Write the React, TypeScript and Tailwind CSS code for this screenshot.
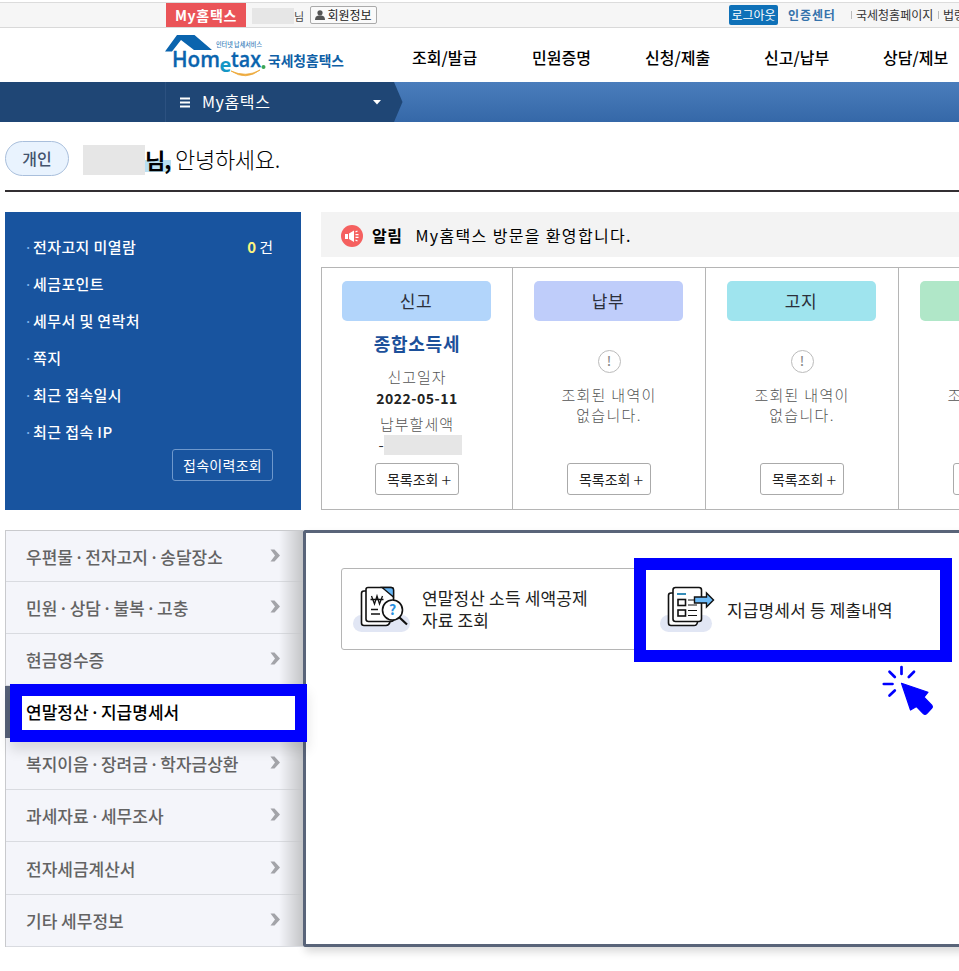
import clsx from 'clsx'

interface SummaryItem {
  label: string
  count?: number
}

interface StatusCard {
  title: string
  color: string
  width: string
  filled?: boolean
}

const navItems = [
  { label: '조회/발급', width: 'w-[120px]' },
  { label: '민원증명', width: 'w-[113px]' },
  { label: '신청/제출', width: 'w-[119px]' },
  { label: '신고/납부', width: 'w-[119px]' },
  { label: '상담/제보', width: 'w-[80px]' },
]

const summaryItems: SummaryItem[] = [
  { label: '전자고지 미열람', count: 0 },
  { label: '세금포인트' },
  { label: '세무서 및 연락처' },
  { label: '쪽지' },
  { label: '최근 접속일시' },
  { label: '최근 접속 IP' },
]

const statusCards: StatusCard[] = [
  { title: '신고', color: 'bg-[#b2d5fb]', width: 'w-[191px]', filled: true },
  { title: '납부', color: 'bg-[#bfcdfa]', width: 'w-[193px]' },
  { title: '고지', color: 'bg-[#9fe4ee]', width: 'w-[193px]' },
  { title: '환급', color: 'bg-[#b0e7c8]', width: 'w-[193px]' },
]

const menuItems = [
  '우편물 · 전자고지 · 송달장소',
  '민원 · 상담 · 불복 · 고충',
  '현금영수증',
  '연말정산 · 지급명세서',
  '복지이음 · 장려금 · 학자금상환',
  '과세자료 · 세무조사',
  '전자세금계산서',
  '기타 세무정보',
]

const ACTIVE_MENU = 3

const Logo = () => (
  <svg width="182" height="46" viewBox="0 0 182 46" className="block">
    <path d="M0 18.500 L12 2 H29.500 L47 17 H29 L16 7 L7 18.500 Z" fill="#0a64ae" />
    <text x="51" y="14" fontSize="6.5" fontWeight="500" fill="#3a7fbb" textLength="46" lengthAdjust="spacingAndGlyphs">
      인터넷 납세서비스
    </text>
    <g fontFamily="'Open Sans', sans-serif" fontWeight="600" fill="#0a64ae" stroke="#0a64ae" strokeWidth="0.3">
      <text x="7" y="34" fontSize="21" textLength="48" lengthAdjust="spacingAndGlyphs">Hom</text>
      <text x="66" y="34" fontSize="21" textLength="30" lengthAdjust="spacingAndGlyphs">tax</text>
      <text x="54.5" y="39" fontSize="20" fontWeight="700" fill="#1597c5" stroke="none">e</text>
    </g>
    <circle cx="98.500" cy="34" r="2" fill="#3aa655" />
    <path d="M66 38 Q81 48 95 37 Q81 45 66 38 Z" fill="#eda93b" stroke="#eda93b" strokeWidth="0.8" />
    <text x="103" y="33" fontSize="14" fontWeight="700" fill="#0f5fa6" textLength="76" lengthAdjust="spacingAndGlyphs">
      국세청홈택스
    </text>
  </svg>
)

const SearchDocIcon = () => (
  <svg width="58" height="48" viewBox="0 0 58 48" fill="none" stroke="#111" strokeWidth="1.6">
    <rect x="0" y="30" width="57" height="17" rx="8.5" fill="#e1e6f4" stroke="none" />
    <path d="M13 6 H11 Q8.500 6 8.500 8.500 V38 Q8.500 40.500 11 40.500 H33 Q36 40.500 37 37" fill="#fff" />
    <path d="M15 2.500 H38 Q40.500 2.500 40.500 5 V34 Q40.500 36.500 38 36.500 H15.500 Q13 36.500 13 34 V4.500 Q13 2.500 15 2.500 Z" fill="#fff" />
    <path d="M29 2.500 H38 Q40.500 2.500 40.500 5 V12 Z" fill="#66b5f5" strokeWidth="1.300" />
    <path d="M18.500 11 L21.500 19 L24 11 L26.500 19 L29.500 11 M17.500 14.500 H30.500" strokeWidth="1.3" />
    <path d="M18 24.500 H25 M18 29 H27" strokeWidth="1.4" />
    <circle cx="39.500" cy="25" r="10" fill="#fff" />
    <path d="M46.500 32.500 L54 39.500" strokeWidth="2.200" />
    <text x="39.700" y="30" fontSize="14" fontWeight="700" fill="#2a8fe0" stroke="none" textAnchor="middle">?</text>
  </svg>
)

const SubmitDocIcon = () => (
  <svg width="56" height="48" viewBox="0 0 56 48" fill="none" stroke="#111" strokeWidth="1.6">
    <rect x="0" y="30" width="52" height="17" rx="8.500" fill="#e1e6f4" stroke="none" />
    <path d="M13 8 H11 Q8.500 8 8.500 10.500 V38 Q8.500 40.500 11 40.500 H34 Q37 40.500 37.500 37" fill="#fff" />
    <rect x="13" y="2.500" width="28.500" height="34" rx="2.500" fill="#fff" />
    <path d="M17 9 H26" stroke="#1f7fb0" strokeWidth="1.8" />
    <rect x="18" y="14.500" width="7.500" height="6" />
    <rect x="18" y="25" width="7.500" height="6" />
    <path d="M28 15 H36 M28 20 H37 M28 25.500 H37 M28 30.500 H37" strokeWidth="1.200" />
    <path d="M34.500 12 H46.500 V8 L53.500 15 L46.500 22 V18 H34.500 Z" fill="#6bbaf8" strokeWidth="1.400" />
  </svg>
)

const SectionArrow = () => (
  <svg width="11" height="13" viewBox="0 0 11 13" fill="#a3a4a9" className="-mt-0.5">
    <path d="M0.500 0.500 H4.500 L10 6.500 L4.500 12.500 H0.500 L5 6.500 Z" />
  </svg>
)

const ClickCursor = () => (
  <svg width="52" height="52" viewBox="0 0 52 52" className="absolute left-[882px] top-[665px]">
    <g stroke="#0000fe" strokeWidth="2.700" strokeLinecap="round">
      <path d="M19.500 2 V9 M7.500 6.800 L12.800 12 M32 6.800 L26.800 12 M1.800 19 H10.500 M7.500 30.500 L12.800 25.500" />
    </g>
    <path
      d="M19.500 18.300 L46 27.200 L42 32.200 L50 40.500 Q51 42 49.800 43.200 L44.500 48.800 Q43 50 41.500 48.800 L34.500 41.500 L28.500 45 Z"
      fill="#0000fe"
      stroke="#0000fe"
      strokeWidth="1.200"
      strokeLinejoin="round"
    />
  </svg>
)

const UtilityBar = () => (
  <div className="flex h-7 items-center border-b border-[#d9d9d9] bg-[#f6f6f6] pl-[166px] shadow-[inset_0_2px_0_#fff,inset_0_3px_0_#dcdcdc]">
    <div className="mt-[3px] flex h-6 w-20 shrink-0 items-center justify-center bg-[#ea5458] text-[14px] font-bold tracking-[0.700px] text-white">
      My홈택스
    </div>
    <div className="ml-1.5 mt-1 h-4 w-[42px] shrink-0 bg-[#e6e6e6]" />
    <span className="mt-1.5 w-[10px] shrink-0 text-[11px] text-[#444]">님</span>
    <div className="ml-[6px] mt-0.5 flex h-[18px] w-[67px] shrink-0 items-center justify-center gap-0.5 rounded-xs border border-[#aaa] bg-[#fafafa] text-[12px] text-[#222]">
      <svg width="10" height="10" viewBox="0 0 10 10" fill="#555">
        <circle cx="5" cy="2.800" r="2.600" />
        <path d="M0 10 Q0 5.800 3.500 5.500 H6.500 Q10 5.800 10 10 Z" />
      </svg>
      <span>회원정보</span>
    </div>
    <div className="ml-[352px] mt-0.5 flex h-5 w-[49px] shrink-0 items-center justify-center rounded-xs bg-[#0f71b8] text-[12px] text-white">
      로그아웃
    </div>
    <span className="ml-[10px] mt-0.5 w-[63px] shrink-0 text-[12px] font-bold tracking-[0.900px] text-[#3572ab]">인증센터</span>
    <span className="mt-0.5 h-2 w-px shrink-0 bg-[#bbb]" />
    <span className="ml-1 mt-0.5 w-[82px] shrink-0 text-[12px] text-[#333]">국세청홈페이지</span>
    <span className="mt-0.5 h-2 w-px shrink-0 bg-[#bbb]" />
    <span className="ml-1 mt-0.5 shrink-0 text-[12px] text-[#333]">법령정보</span>
  </div>
)

const Header = () => (
  <header>
    <UtilityBar />
    <div className="flex h-[54px] pl-[165px]">
      <div className="w-[247px] shrink-0 pt-[5px]">
        <Logo />
      </div>
      <nav className="flex items-center pt-1 text-[16px] font-medium text-black">
        {navItems.map((item) => (
          <a key={item.label} className={clsx('shrink-0', item.width)}>
            {item.label}
          </a>
        ))}
      </nav>
    </div>
    <div className="flex h-10 bg-linear-to-b from-[#4a7dbc] to-[#3568a8]">
      <div className="w-[166px] border-r border-[#2c5180] bg-[#1f4675]" />
      <div className="flex w-[228px] items-center bg-[#1f4675] pl-[14px] pr-[13px] text-white">
        <svg width="10" height="11" viewBox="0 0 10 11" stroke="#fff" strokeWidth="2">
          <path d="M0 1.500 H10 M0 5.500 H10 M0 9.500 H10" />
        </svg>
        <span className="-mt-0.5 ml-3 grow text-[16px] tracking-[0.600px]">My홈택스</span>
        <svg width="8" height="5" viewBox="0 0 8 5" fill="#fff">
          <path d="M0 0 H8 L4 4.500 Z" />
        </svg>
      </div>
      <svg width="9" height="40" viewBox="0 0 9 40">
        <path d="M0 0 L8.500 20 L0 40 Z" fill="#1f4675" />
      </svg>
    </div>
  </header>
)

const Greeting = () => (
  <div className="ml-[5px] flex h-[70px] items-center border-b-2 border-[#332f32] pt-[5px]">
    <span className="flex h-[35px] w-16 items-center justify-center rounded-full border border-[#a9bfdc] bg-[#e9f3fe] pb-0.5 text-[16px] font-medium text-[#44546e]">
      개인
    </span>
    <span className="ml-[14px] mt-[3px] h-[30px] w-[62px] bg-[#e6e6e6]" />
    <span className="w-[26px] bg-linear-to-b from-transparent from-55% to-[#b9dff2] to-55% text-[22px] leading-[26px] font-bold tracking-[-1px] text-black">
      님,
    </span>
    <span className="-mt-0.5 ml-1 text-[22px] font-light tracking-[-0.300px] text-black">안녕하세요.</span>
  </div>
)

const SummaryPanel = () => (
  <section className="h-[298px] w-[296px] shrink-0 bg-[#18549f] pt-4 pr-7 pl-[19px] text-white">
    <ul>
      {summaryItems.map((item) => (
        <li key={item.label} className="flex h-[37px] items-center text-[15px]">
          <span className="w-[9px] text-[#7fb4ec]">·</span>
          <span className="grow font-medium tracking-[0.400px]">{item.label}</span>
          {item.count !== undefined && (
            <span>
              <b className="mr-[3px] text-[#fdf57e]">{item.count}</b>건
            </span>
          )}
        </li>
      ))}
    </ul>
    <button className="-mt-px ml-auto flex h-8 w-[101px] items-center justify-center rounded-[3px] border border-[#6e98cc] text-[14px] tracking-[0.300px]">
      접속이력조회
    </button>
  </section>
)

const Notice = () => (
  <div className="flex h-[45px] items-center bg-[#f3f3f3] pl-5 text-[16px] text-black">
    <svg width="22" height="22" viewBox="0 0 22 22" className="mt-0.5">
      <circle cx="11" cy="11" r="11" fill="#f5605f" />
      <path d="M4 9 H7 V14 H4 Z M8 8.500 L13 5.500 V17 L8 14 Z" fill="#fff" />
      <path d="M14.500 7 L16.500 6 M14.500 9.700 H17.500 M14.500 12.300 H17.500 M14.500 15 L16.500 16" stroke="#fff" strokeWidth="1.300" />
    </svg>
    <strong className="ml-[9px] font-bold tracking-[0.500px]">알림</strong>
    <span className="ml-[13px] tracking-[1.350px]">My홈택스 방문을 환영합니다.</span>
  </div>
)

const Card = ({ card }: { card: StatusCard }) => (
  <div
    className={clsx(
      'flex shrink-0 flex-col items-center border-r border-[#b5b5b5] pt-[13px]',
      card.width,
    )}
  >
    <h3
      className={clsx(
        'mr-0.5 flex h-10 w-[149px] items-center justify-center rounded-[5px] pb-0.5 text-[17px] tracking-[0.500px] text-[#2b2f3a]',
        card.color,
      )}
    >
      {card.title}
    </h3>
    <div className="flex h-[142px] w-full flex-col items-center text-[15px] text-[#555]">
      {card.filled ? (
        <>
          <p className="mt-2 text-[18px] leading-7 font-bold tracking-[0.700px] text-[#1c509a]">종합소득세</p>
          <p className="mt-[10px] leading-5 font-light tracking-[1px]">신고일자</p>
          <p className="text-[14px] leading-[22px] font-bold tracking-[0.500px] text-[#222]">2022-05-11</p>
          <p className="mt-[5px] leading-5 font-light tracking-[1px]">납부할세액</p>
          <p className="mt-px ml-[7px] flex w-[84px] items-center leading-5 text-[#333]">
            -<span className="h-5 w-[78px] shrink-0 bg-[#e6e6e6]" />
          </p>
        </>
      ) : (
        <>
          <span className="mt-[29px] flex size-[23px] items-center justify-center rounded-full border border-[#bbb] pb-0.5 text-[13px] font-medium text-[#888]">
            !
          </span>
          <p className="mt-3 text-center leading-5 font-light tracking-[1.300px]">
            조회된 내역이
            <br />
            없습니다.
          </p>
        </>
      )}
    </div>
    <button className="flex h-8 w-[84px] shrink-0 items-center justify-center gap-[3px] rounded-[3px] border border-[#aaa] pl-1 text-[14px] text-[#222]">
      목록조회 <span className="text-[18px] font-light">+</span>
    </button>
  </div>
)

const SideMenu = () => (
  <ul className="relative w-[298px] shrink-0 border border-r-0 border-[#c9cacd] bg-[#f4f5fa]">
    {menuItems.map((item, index) => (
      <li
        key={item}
        className={clsx(
          'flex h-[52.100px] items-center justify-between border-b border-[#d9dbe0] pr-[22px] pl-5 text-[17px] font-medium first:h-[51px] last:border-b-0',
          index === ACTIVE_MENU ? 'bg-white text-black' : 'text-[#636363]',
          item.includes('·') && '[word-spacing:-2.500px]',
        )}
      >
        {item}
        {index !== ACTIVE_MENU && <SectionArrow />}
      </li>
    ))}
    <span className="absolute inset-y-0 right-0 w-6 bg-linear-to-r from-transparent to-[#c4c5c7]" />
  </ul>
)

const App = () => {
  return (
    <div className="relative h-[971px] w-[959px] overflow-hidden bg-white font-['Noto_Sans_CJK_KR',sans-serif] leading-none whitespace-nowrap">
      <Header />
      <Greeting />
      <main className="ml-[5px] pt-5">
        <div className="flex gap-5">
          <SummaryPanel />
          <section className="w-[638px] shrink-0 overflow-hidden">
            <Notice />
            <div className="mt-[10px] flex h-[243px] w-[771px] border border-[#b5b5b5]">
              {statusCards.map((card) => (
                <Card key={card.title} card={card} />
              ))}
            </div>
          </section>
        </div>

        <div className="mt-5 flex h-[417px]">
          <SideMenu />
          <section className="flex w-[700px] shrink-0 items-start rounded-l-xs border-[3px] border-[#596479] pt-[35px] pl-[35px] text-[17px] tracking-[0.150px] text-[#222] shadow-[2px_5px_8px_rgba(0,0,0,0.15)]">
            <a className="flex h-[82px] w-[304px] items-center rounded-[3px] border border-[#b5b5b5] pl-[11px] leading-[22px]">
              <SearchDocIcon />
              <span className="ml-[11px]">
                연말정산 소득 세액공제
                <br />
                자료 조회
              </span>
            </a>
            <a className="flex h-[82px] w-[304px] items-center pl-[15px]">
              <SubmitDocIcon />
              <span className="ml-[11px]">지급명세서 등 제출내역</span>
            </a>
          </section>
        </div>
      </main>

      {/* step highlights */}
      <span className="absolute top-[686px] left-[5px] h-[52px] w-[5px] bg-[#566078]" />
      <span className="absolute top-[684px] left-[10px] h-[58px] w-[297px] border-[12px] border-[#0000fe] shadow-[0_8px_12px_rgba(0,0,0,0.12)]" />
      <span className="absolute top-[696px] left-[270px] h-[34px] w-[25px] bg-white" />
      <span className="absolute top-[558px] left-[634px] h-[104px] w-[318px] border-[12px] border-[#0000fe]" />
      <ClickCursor />
    </div>
  )
}

export default App
